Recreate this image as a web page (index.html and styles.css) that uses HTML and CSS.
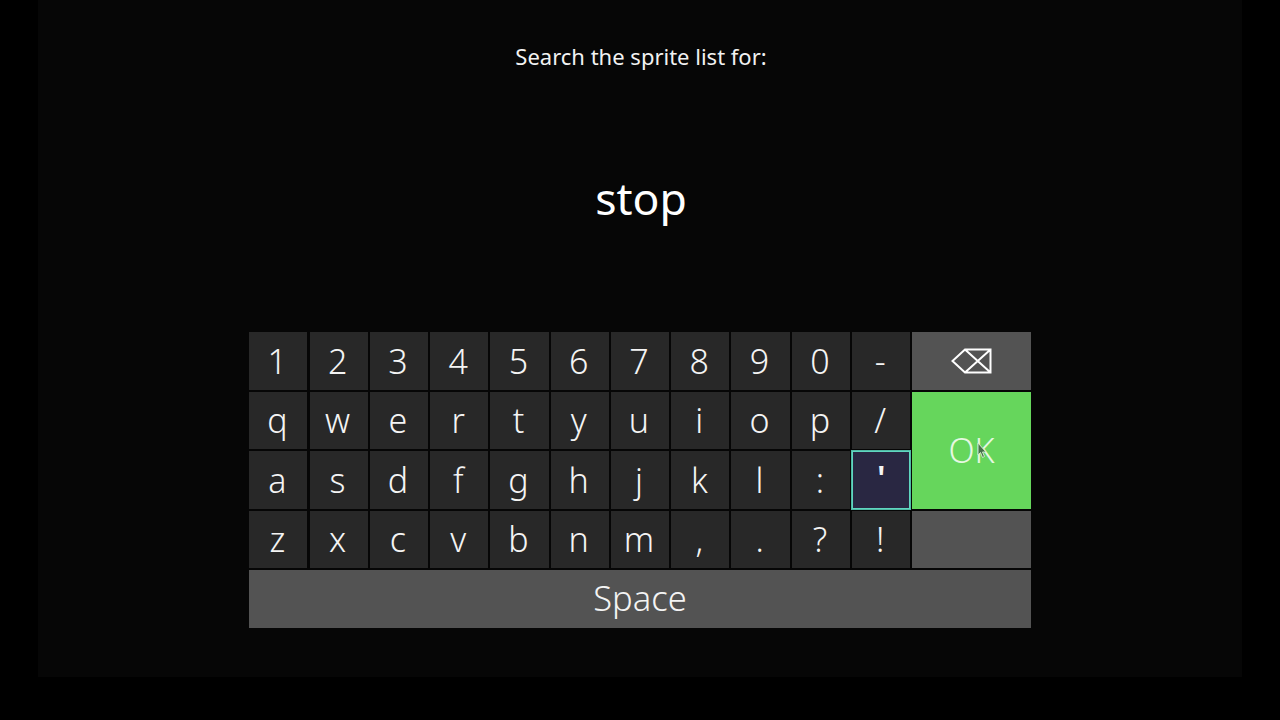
FILE: index.html
```html
<!DOCTYPE html>
<html>
  <head>
    <meta charset="UTF-8">
    <title>Search</title>
    <link rel="stylesheet" href="styles.css">
  </head>
  <body>
    <div class="panel">
      <div class="prompt">Search the sprite list for:</div>
      <div class="query">stop</div>

      <div class="keyboard">
        <div class="key">1</div>
        <div class="key">2</div>
        <div class="key">3</div>
        <div class="key">4</div>
        <div class="key">5</div>
        <div class="key">6</div>
        <div class="key">7</div>
        <div class="key">8</div>
        <div class="key">9</div>
        <div class="key">0</div>
        <div class="key">-</div>
        <div class="key wide grey">
          <svg class="backspace" width="41" height="26" viewBox="0 0 41 26">
            <path d="M39.5 1.5H14L1.5 13 14 24.5H39.5zM14 1.5l25.500 23M14 24.500l25.500-23" fill="none" stroke="#fff" stroke-width="2"/>
          </svg>
        </div>

        <div class="key">q</div>
        <div class="key">w</div>
        <div class="key">e</div>
        <div class="key">r</div>
        <div class="key">t</div>
        <div class="key">y</div>
        <div class="key">u</div>
        <div class="key">i</div>
        <div class="key">o</div>
        <div class="key">p</div>
        <div class="key">/</div>
        <div class="key ok">
          OK
          <svg class="cursor" width="11" height="17" viewBox="0 0 11 17">
            <path d="M1 1v12l2.500-2.500 2 5 2-1-2-4.500H9z" fill="#47704a" stroke="#cfe9cc" stroke-width="1"/>
          </svg>
        </div>

        <div class="key">a</div>
        <div class="key">s</div>
        <div class="key">d</div>
        <div class="key">f</div>
        <div class="key">g</div>
        <div class="key">h</div>
        <div class="key">j</div>
        <div class="key">k</div>
        <div class="key">l</div>
        <div class="key">:</div>
        <div class="key selected">'</div>

        <div class="key">z</div>
        <div class="key">x</div>
        <div class="key">c</div>
        <div class="key">v</div>
        <div class="key">b</div>
        <div class="key">n</div>
        <div class="key">m</div>
        <div class="key">,</div>
        <div class="key">.</div>
        <div class="key">?</div>
        <div class="key">!</div>
        <div class="key wide grey"></div>

        <div class="key space grey">Space</div>
      </div>
    </div>
  </body>
</html>
```

FILE: styles.css
```css
html, body {
  margin: 0;
  height: 100%;
  background-color: #000;
}

body {
  padding: 0 38px 43px;
  box-sizing: border-box;
  font-family: "Noto Sans", sans-serif;
  font-weight: 350;
  color: #fff;
}

.panel {
  height: 100%;
  background-color: #060606;
  display: flex;
  flex-direction: column;
  align-items: center;
}

.prompt {
  margin-top: 40px;
  padding-left: 2px;
  font-size: 22px;
  font-weight: 400;
  line-height: 32px;
  color: #f2f2f2;
}

.query {
  margin-top: 90px;
  padding-left: 2px;
  font-size: 44.5px;
  font-weight: 400;
  line-height: 72px;
}

.keyboard {
  margin-top: 98px;
  display: grid;
  grid-template-columns: repeat(13, 58.2px);
  grid-template-rows: repeat(5, 57.5px);
  column-gap: 2.1px;
  row-gap: 2px;
}

.key {
  position: relative;
  display: flex;
  align-items: center;
  justify-content: center;
  padding-right: 2px;
  background-color: #282828;
  font-size: 34px;
  color: #f4f4f4;
}

.wide {
  grid-column: span 2;
  padding-right: 0;
}

.grey {
  background-color: #535353;
}

.ok {
  grid-column: span 2;
  grid-row: span 2;
  padding-right: 0;
  background-color: #66d65c;
  color: #e6f8e2;
}

.selected {
  box-sizing: border-box;
  padding: 3px 0 0;
  border: 1px solid #5fd6c0;
  outline: 1px solid #4fb8a4;
  background-color: #292742;
  align-items: flex-start;
  font-weight: 600;
}

.space {
  grid-column: span 13;
  padding: 0 0 2px;
  font-size: 34.5px;
}

.cursor {
  position: absolute;
  left: 65px;
  top: 50px;
}
```
